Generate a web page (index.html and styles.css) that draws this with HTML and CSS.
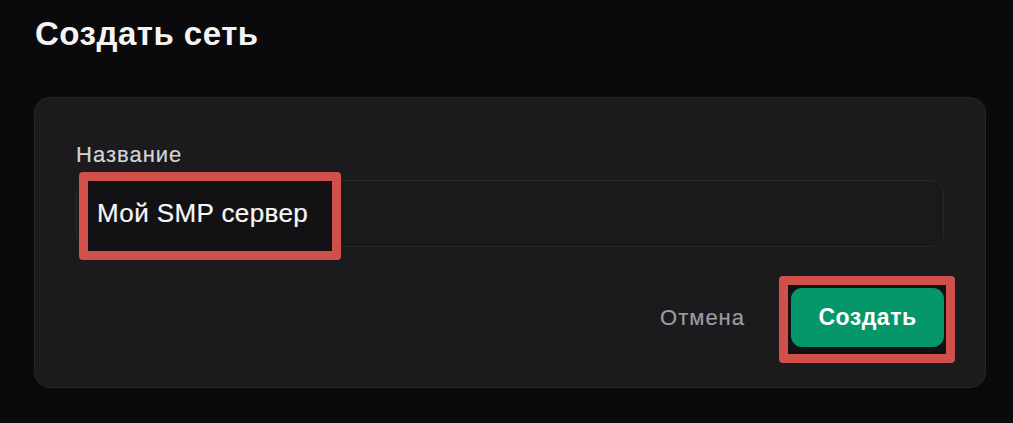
FILE: index.html
```html
<!DOCTYPE html>
<html lang="ru">
<head>
<meta charset="utf-8">
<title>Создать сеть</title>
<link rel="stylesheet" href="styles.css">
</head>
<body>
<main class="page">
  <h1 class="title">Создать сеть</h1>
  <section class="card">
    <label class="label">Название</label>
    <div class="input">
      <span class="mark mark-input"></span>
      <span class="input-text">Мой SMP сервер</span>
    </div>
    <div class="actions">
      <button class="btn-cancel">Отмена</button>
      <div class="btn-wrap">
        <span class="mark mark-btn"></span>
        <button class="btn-primary">Создать</button>
      </div>
    </div>
  </section>
</main>
</body>
</html>
```
FILE: styles.css
```css
* { box-sizing: border-box; }
html, body { margin: 0; padding: 0; }
body {
  background: #0a0a0c;
  font-family: "Liberation Sans", Arial, sans-serif;
  color: #f2f2f3;
  width: 1013px;
  height: 423px;
  overflow: hidden;
}
.page {
  padding: 14px 27px 0 34px;
}
.title {
  margin: 0 0 0 1px;
  font-size: 33px;
  line-height: 40px;
  font-weight: 700;
  letter-spacing: 0.5px;
  color: #f4f4f5;
}
.card {
  margin-top: 43px;
  width: 952px;
  height: 291px;
  background: #1b1b1d;
  border: 1px solid #27272a;
  border-radius: 16px;
  padding: 43px 41px 0 41px;
  display: flex;
  flex-direction: column;
}
.label {
  font-size: 22px;
  line-height: 28px;
  letter-spacing: 1px;
  color: #d4d4d8;
  -webkit-text-stroke: 0.2px #d4d4d8;
}
.input {
  position: relative;
  margin-top: 11px;
  height: 67px;
  border: 1px solid #27272a;
  border-radius: 12px;
  background: #1a1a1c;
  display: flex;
  align-items: center;
  padding-left: 20px;
}
.input-text {
  position: relative;
  z-index: 1;
  font-size: 26px;
  letter-spacing: 0.4px;
  color: #f7f7f8;
  -webkit-text-stroke: 0.2px #f7f7f8;
}
.mark {
  position: absolute;
  border: 9px solid #d1504a;
  border-radius: 4px;
  background: #121214;
}
.mark-input {
  left: 2px;
  top: -9px;
  width: 262px;
  height: 88px;
  z-index: 0;
}
.actions {
  margin-top: 41px;
  display: flex;
  justify-content: flex-end;
  align-items: center;
  gap: 46px;
}
.btn-cancel {
  background: none;
  border: none;
  padding: 0;
  font-family: inherit;
  font-size: 22px;
  letter-spacing: 1px;
  color: #9c9ca3;
  -webkit-text-stroke: 0.2px #9c9ca3;
}
.btn-wrap {
  position: relative;
}
.mark-btn {
  left: -12px;
  top: -12px;
  width: 176px;
  height: 87px;
}
.btn-primary {
  position: relative;
  display: block;
  width: 153px;
  height: 59px;
  border: none;
  border-radius: 11px;
  background: #059669;
  color: #ffffff;
  font-family: inherit;
  font-size: 23px;
  font-weight: 700;
  letter-spacing: 0.5px;
}
```
